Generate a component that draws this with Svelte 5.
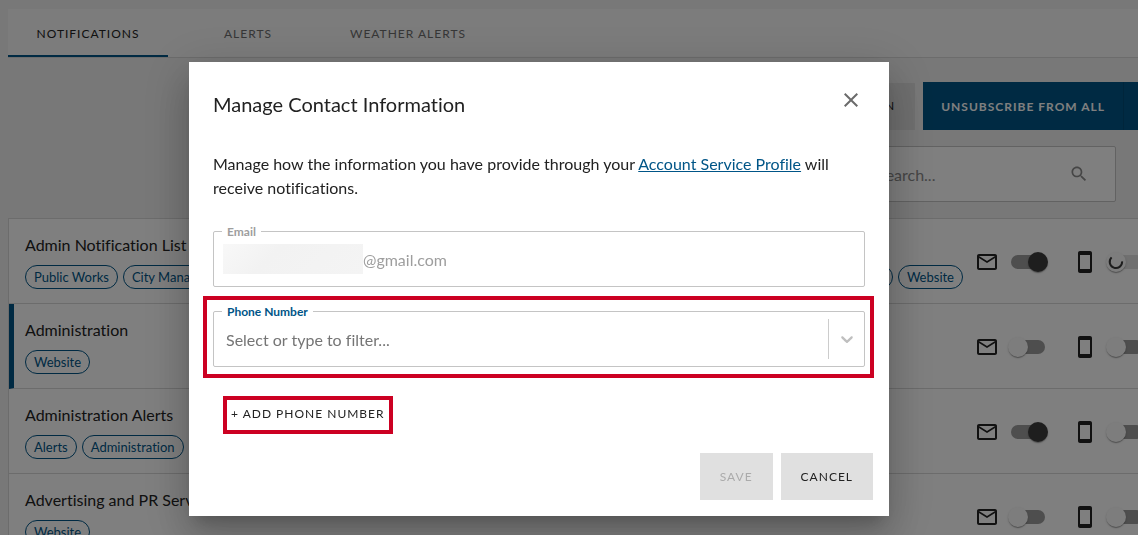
<script>
  const tabs = ['Notifications', 'Alerts', 'Weather Alerts'];
  let activeTab = $state('Notifications');
  let search = $state('');
  let phone = $state('');

  let rows = $state([
    {
      title: 'Admin Notification List',
      tags: ['Public Works', 'City Manager'],
      endTags: ['Administration', 'Website'],
      email: true,
      sms: false,
      loading: true
    },
    { title: 'Administration', tags: ['Website'], endTags: [], email: false, sms: false, marked: true },
    { title: 'Administration Alerts', tags: ['Alerts', 'Administration'], endTags: [], email: true, sms: false },
    { title: 'Advertising and PR Services', tags: ['Website'], endTags: [], email: false, sms: false }
  ]);
</script>

{#snippet toggle(row, key, label, loading)}
  <label class="switch" class:loading>
    <input type="checkbox" bind:checked={row[key]} disabled={loading} aria-label={label} />
    <span class="track"></span>
    <span class="thumb">
      {#if loading}
        <svg viewBox="0 0 20 20" width="20" height="20" aria-hidden="true">
          <path d="M5.6 5.4A6.2 6.2 0 1 0 16.1 9.4" fill="none" stroke="#3a3a3a" stroke-width="2" />
        </svg>
      {/if}
    </span>
  </label>
{/snippet}

<div class="page">
  <nav class="tabs" role="tablist">
    {#each tabs as tab}
      <button
        class="tab"
        class:active={tab === activeTab}
        role="tab"
        aria-selected={tab === activeTab}
        onclick={() => (activeTab = tab)}>{tab}</button>
    {/each}
  </nav>

  <div class="actions">
    <button class="btn neutral">Manage Contact Information</button>
    <div class="split">
      <button class="btn primary">Unsubscribe from all</button>
      <button class="btn primary more" aria-label="More options"></button>
    </div>
  </div>

  <div class="search">
    <input type="search" placeholder="Search..." aria-label="Search" bind:value={search} />
    <svg viewBox="0 0 24 24" width="20" height="20" aria-hidden="true">
      <path
        fill="#8c8c8c"
        d="M15.5 14h-.79l-.28-.27C15.41 12.59 16 11.11 16 9.5 16 5.91 13.09 3 9.5 3S3 5.91 3 9.5 5.91 16 9.5 16c1.61 0 3.09-.59 4.23-1.57l.27.28v.79l5 4.99L20.49 19l-4.99-5zm-6 0C7.01 14 5 11.99 5 9.5S7.01 5 9.5 5 14 7.01 14 9.5 11.99 14 9.5 14z"
      />
    </svg>
  </div>

  <ul class="list">
    {#each rows as row}
      <li class="row" class:marked={row.marked}>
        <div class="info">
          <div class="title">{row.title}</div>
          <div class="chips">
            {#each row.tags as tag}<span class="chip">{tag}</span>{/each}
            <span class="spacer"></span>
            {#each row.endTags as tag}<span class="chip">{tag}</span>{/each}
          </div>
        </div>
        <div class="channel">
          <svg viewBox="0 0 24 24" width="24" height="24" aria-hidden="true">
            <path
              fill="#222"
              d="M20 4H4c-1.1 0-1.99.9-1.99 2L2 18c0 1.1.9 2 2 2h16c1.1 0 2-.9 2-2V6c0-1.1-.9-2-2-2zm0 14H4V8l8 5 8-5v10zm-8-7L4 6h16l-8 5z"
            />
          </svg>
          {@render toggle(row, 'email', 'Email', false)}
        </div>
        <div class="channel">
          <svg viewBox="0 0 24 24" width="24" height="24" aria-hidden="true">
            <path
              fill="#222"
              d="M17 1.01L7 1c-1.1 0-2 .9-2 2v18c0 1.1.9 2 2 2h10c1.1 0 2-.9 2-2V3c0-1.1-.9-1.99-2-1.99zM17 19H7V5h10v14z"
            />
          </svg>
          {@render toggle(row, 'sms', 'Text message', !!row.loading)}
        </div>
      </li>
    {/each}
  </ul>
</div>

<div class="overlay">
  <div class="dialog" role="dialog" aria-modal="true" aria-labelledby="dialog-title">
    <header>
      <h2 id="dialog-title">Manage Contact Information</h2>
      <button class="close" aria-label="Close">
        <svg viewBox="0 0 24 24" width="24" height="24" aria-hidden="true">
          <path
            fill="#6b6b6b"
            d="M19 6.41L17.59 5 12 10.59 6.41 5 5 6.41 10.59 12 5 17.59 6.41 19 12 13.41 17.59 19 19 17.59 13.41 12z"
          />
        </svg>
      </button>
    </header>

    <div class="body">
      <p>
        Manage how the information you have provide through your <a href="#profile">Account Service Profile</a> will
        receive notifications.
      </p>

      <div class="field disabled">
        <label for="email">Email</label>
        <span class="redacted"></span>
        <input id="email" type="text" value="@gmail.com" disabled />
      </div>

      <div class="field highlight phone">
        <label for="phone">Phone Number</label>
        <input id="phone" type="text" role="combobox" aria-expanded="false" aria-controls="phone-options" placeholder="Select or type to filter..." bind:value={phone} />
        <button class="arrow" aria-label="Show phone numbers">
          <svg viewBox="0 0 20 20" width="20" height="20" aria-hidden="true">
            <path
              fill="#bfbfbf"
              d="M4.516 7.548c0.436-0.446 1.043-0.481 1.576 0l3.908 3.747 3.908-3.747c0.533-0.481 1.141-0.446 1.574 0 0.436 0.445 0.408 1.197 0 1.615-0.406 0.418-4.695 4.502-4.695 4.502-0.217 0.223-0.502 0.335-0.787 0.335s-0.57-0.112-0.789-0.335c0 0-4.287-4.084-4.695-4.502s-0.436-1.17 0-1.615z"
            />
          </svg>
        </button>
      </div>

      <button class="add highlight">+ Add phone number</button>
    </div>

    <footer>
      <button class="btn neutral" disabled>Save</button>
      <button class="btn neutral">Cancel</button>
    </footer>
  </div>
</div>

<style>
  :global(body) {
    margin: 0;
    overflow: hidden;
    background: #f0f0f0;
  }
  :global(#app) {
    font-family: Lato, 'Liberation Sans', sans-serif;
    font-size: 16px;
    line-height: 24px;
    font-variant-ligatures: none;
    color: #222;
  }
  .page,
  .page *,
  .overlay,
  .overlay * {
    box-sizing: border-box;
  }
  button,
  input {
    font: inherit;
    color: inherit;
    border: 0;
    margin: 0;
    padding: 0;
    background: none;
    outline: none;
  }
  button {
    cursor: pointer;
  }
  svg {
    display: block;
    flex: none;
  }

  .page {
    height: 100vh;
    overflow: hidden;
    padding: 9px 0 0 8px;
  }
  .tabs {
    display: flex;
    background: #f8f8f8;
    border-bottom: 1px solid #d8d8d8;
  }
  .tab {
    width: 160px;
    height: 48px;
    padding-top: 2px;
    font-size: 12px;
    letter-spacing: 1px;
    text-transform: uppercase;
    color: #6e6e6e;
    border-top: 2px solid transparent;
    border-bottom: 2px solid transparent;
  }
  .tab.active {
    color: #222;
    border-bottom-color: #005587;
  }

  .btn {
    height: 47px;
    padding: 0 20px;
    font-size: 12px;
    letter-spacing: 1px;
    text-transform: uppercase;
    white-space: nowrap;
  }
  .btn.neutral {
    background: #e0e0e0;
  }
  .btn:disabled {
    color: #ababab;
  }
  .actions {
    display: flex;
    justify-content: flex-end;
    align-items: center;
    gap: 8px;
    margin: 24px -24px 16px 0;
  }
  .split {
    display: flex;
  }
  .btn.primary {
    height: 48px;
    padding: 2px 18px 0;
    background: #005587;
    color: #fff;
    font-weight: 700;
  }
  .btn.more {
    width: 39px;
    padding: 0;
    border-left: 1px solid #004a76;
  }

  .search {
    display: flex;
    align-items: center;
    width: 320px;
    height: 56px;
    margin: 0 22px 16px auto;
    padding: 0 26px 0 80px;
    border: 1px solid #c4c4c4;
    border-radius: 2px;
    background: #fff;
  }
  .search input {
    flex: 1;
    min-width: 0;
    padding-top: 2px;
  }
  .search input::placeholder {
    color: #8c8c8c;
    opacity: 1;
  }

  .list {
    list-style: none;
    margin: 0 -40px 0 0;
    padding: 0;
    border: 1px solid #d8d8d8;
    background: #fff;
  }
  .row {
    display: flex;
    align-items: center;
    gap: 16px;
    height: 85px;
    padding: 0 22px 0 16px;
    border-bottom: 1px solid #d8d8d8;
  }
  .row.marked {
    border-left: 5px solid #005587;
    padding-left: 11px;
  }
  .info {
    flex: 1;
    margin-right: -4px;
  }
  .title {
    margin-bottom: 8px;
  }
  .chips {
    display: flex;
    gap: 5px;
  }
  .spacer {
    flex: 1;
  }
  .chip {
    height: 24px;
    padding: 0 8px;
    border: 1px solid #005587;
    border-radius: 12px;
    font-size: 13px;
    line-height: 22px;
    color: #005587;
  }
  .channel {
    display: flex;
    align-items: center;
    padding-top: 2px;
  }

  .switch {
    position: relative;
    display: flex;
    align-items: center;
    justify-content: center;
    width: 58px;
    height: 38px;
  }
  .switch input {
    position: absolute;
    inset: 0;
    opacity: 0;
  }
  .track {
    width: 34px;
    height: 14px;
    border-radius: 7px;
    background: #9c9c9c;
  }
  .thumb {
    position: absolute;
    left: 9px;
    top: 9px;
    width: 20px;
    height: 20px;
    border-radius: 50%;
    background: #fafafa;
    box-shadow:
      0 2px 1px -1px rgba(0, 0, 0, 0.2),
      0 1px 1px rgba(0, 0, 0, 0.14),
      0 1px 3px rgba(0, 0, 0, 0.12);
  }
  .switch input:checked ~ .thumb {
    left: 29px;
    background: #3d3d3d;
  }
  .loading .track {
    background: #e0e0e0;
  }

  .overlay {
    position: fixed;
    inset: 0;
    display: flex;
    align-items: center;
    justify-content: center;
    padding: 43px 60px 0 0;
    background: rgba(0, 0, 0, 0.5);
  }
  .dialog {
    width: 700px;
    max-width: 100%;
    background: #fff;
    box-shadow:
      0 11px 15px -7px rgba(0, 0, 0, 0.2),
      0 24px 38px 3px rgba(0, 0, 0, 0.14),
      0 9px 46px 8px rgba(0, 0, 0, 0.12);
  }
  header {
    display: flex;
    align-items: flex-start;
    justify-content: space-between;
    padding: 26px 26px 0 24px;
  }
  h2 {
    margin: 0;
    font-size: 20px;
    line-height: 32px;
    font-weight: 400;
  }
  .body {
    padding: 32px 24px 0;
  }
  p {
    margin: 0 0 31px;
  }
  a {
    color: #005587;
  }
  .field {
    position: relative;
    display: flex;
    align-items: center;
    height: 56px;
    margin-bottom: 24px;
    border: 1px solid #c4c4c4;
    border-radius: 2px;
  }
  .field label {
    position: absolute;
    left: 8px;
    top: -8px;
    padding: 0 5px;
    background: #fff;
    font-size: 12px;
    line-height: 16px;
    font-weight: 700;
    color: #005587;
  }
  .field input {
    flex: 1;
    min-width: 0;
    height: 100%;
    line-height: 24px;
  }
  .field.disabled label,
  .field.disabled input {
    color: #9e9e9e;
  }
  .redacted {
    width: 140px;
    height: 30px;
    margin-left: 9px;
    background: linear-gradient(135deg, #f8f8f8, #f2f2f2 35%, #f4f4f4);
  }
  .phone input {
    padding-left: 12px;
  }
  .phone input::placeholder {
    color: #757575;
    opacity: 1;
  }
  .arrow {
    height: 40px;
    padding: 0 7px 0 8px;
    border-left: 1px solid #ccc;
  }
  .highlight {
    position: relative;
  }
  .highlight::after {
    content: '';
    position: absolute;
    inset: -16px -10px -12px -11px;
    border: 4px solid #cc0022;
    pointer-events: none;
  }
  .add {
    display: block;
    height: 38px;
    margin: 29px 0 19px 10px;
    padding: 0 8px 2px;
    font-size: 12px;
    letter-spacing: 1px;
    text-transform: uppercase;
  }
  .add.highlight::after {
    inset: 0;
  }
  footer {
    display: flex;
    justify-content: flex-end;
    gap: 8px;
    padding: 0 16px 16px;
  }
</style>
